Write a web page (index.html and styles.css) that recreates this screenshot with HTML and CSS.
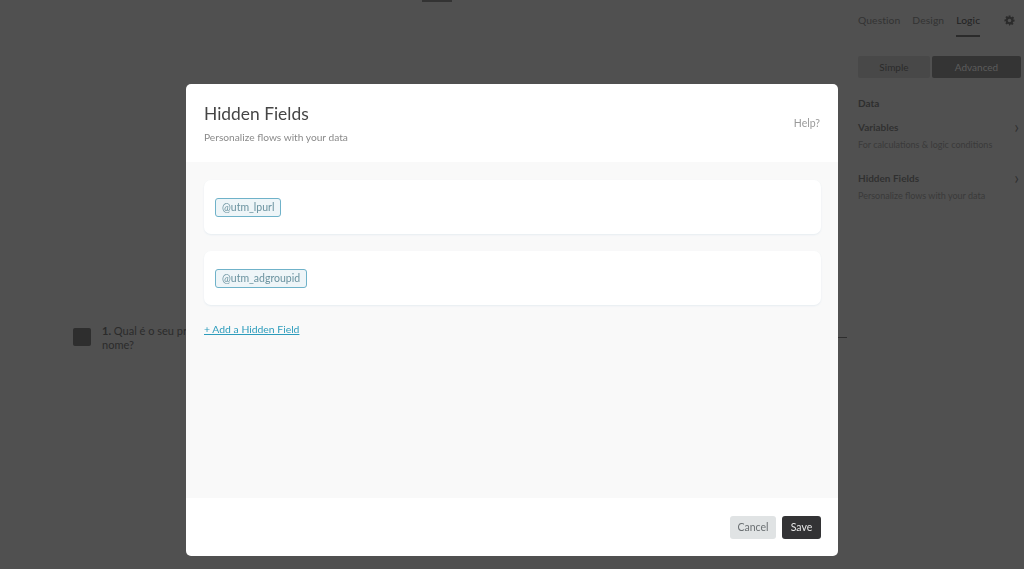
FILE: index.html
```html
<!DOCTYPE html>
<html lang="en">
<head>
    <meta charset="UTF-8">
    <meta name="viewport" content="width=device-width, initial-scale=1.0">
    <title>Hidden Fields</title>
    <link rel="stylesheet" href="styles.css">
</head>
<body>
    <div class="editor">
        <div class="canvas">
            <div class="top-mark"></div>
            <div class="question">
                <div class="question-icon"></div>
                <div class="question-text"><b>1.</b> Qual é o seu pri<br>nome?</div>
            </div>
            <div class="canvas-line"></div>
        </div>
        <div class="sidebar">
            <div class="tabs">
                <span>Question</span>
                <span>Design</span>
                <span class="tab-active">Logic</span>
                <svg class="gear" viewBox="0 0 24 24" width="11" height="11"><path fill="#2b2b2b" d="M10 1h4l.6 3.2 1.9.8 2.7-1.8 2.8 2.8-1.8 2.7.8 1.9L23 10v4l-3.2.6-.8 1.9 1.8 2.7-2.8 2.8-2.7-1.8-1.9.8L13 23h-2l-.6-3.2-1.9-.8-2.7 1.8-2.8-2.8 1.8-2.7-.8-1.9L1 14v-4l3.2-.6.8-1.9-1.8-2.7 2.8-2.8 2.7 1.8 1.9-.8zM12 8a4 4 0 1 0 0 8 4 4 0 0 0 0-8z"/></svg>
            </div>
            <div class="mode">
                <div class="mode-simple">Simple</div>
                <div class="mode-advanced">Advanced</div>
            </div>
            <div class="side-heading">Data</div>
            <div class="side-item">
                <div class="side-title">Variables <span>›</span></div>
                <div class="side-sub">For calculations &amp; logic conditions</div>
            </div>
            <div class="side-item">
                <div class="side-title">Hidden Fields <span>›</span></div>
                <div class="side-sub">Personalize flows with your data</div>
            </div>
        </div>
    </div>

    <div class="modal">
        <div class="modal-head">
            <div>
                <div class="modal-title">Hidden Fields</div>
                <div class="modal-sub">Personalize flows with your data</div>
            </div>
            <a class="help">Help?</a>
        </div>
        <div class="modal-body">
            <div class="field-card"><span class="tag">@utm_lpurl</span></div>
            <div class="field-card"><span class="tag">@utm_adgroupid</span></div>
            <a class="add-link">+ Add a Hidden Field</a>
        </div>
        <div class="modal-foot">
            <button class="btn btn-cancel">Cancel</button>
            <button class="btn btn-save">Save</button>
        </div>
    </div>
</body>
</html>
```

FILE: styles.css
```css
* {
    box-sizing: border-box;
}
body {
    margin: 0;
    height: 569px;
    overflow: hidden;
    background: #505050;
    font-family: Lato, "Open Sans", sans-serif;
    color: #2b2b2b;
}
.editor {
    display: flex;
    height: 100%;
}
.canvas {
    flex: 1;
    position: relative;
}
.top-mark {
    position: absolute;
    top: 0;
    left: 422px;
    width: 30px;
    height: 2px;
    background: #333;
}
.question {
    position: absolute;
    top: 324px;
    left: 73px;
    display: flex;
    gap: 11px;
    font-size: 11px;
    line-height: 14px;
}
.question-icon {
    width: 18px;
    height: 18px;
    margin-top: 4px;
    background: #2e2e2e;
    border-radius: 2px;
}
.question-text {
    white-space: nowrap;
}
.canvas-line {
    position: absolute;
    top: 337px;
    left: 838px;
    width: 9px;
    height: 1px;
    background: #2e2e2e;
}
.sidebar {
    width: 166px;
    padding: 10px 3px 0 0;
    font-size: 10px;
}
.tabs {
    display: flex;
    align-items: center;
    gap: 12px;
    height: 20px;
    font-size: 10.3px;
    letter-spacing: 0.1px;
    color: #333;
}
.tab-active {
    color: #222;
    position: relative;
}
.tab-active::after {
    content: "";
    position: absolute;
    left: 0;
    right: 0;
    bottom: -11px;
    height: 2px;
    background: #2b2b2b;
}
.gear {
    margin-left: 12px;
}
.mode {
    display: flex;
    gap: 2px;
    margin-top: 26px;
    height: 22px;
}
.mode-simple,
.mode-advanced {
    display: flex;
    align-items: center;
    justify-content: center;
    border-radius: 2px;
}
.mode-simple {
    width: 72px;
    background: #484848;
    color: #2b2b2b;
}
.mode-advanced {
    flex: 1;
    background: #343434;
    color: #5c5c5c;
}
.side-heading {
    margin-top: 19px;
    font-weight: 700;
    color: #2e2e2e;
}
.side-item {
    margin-top: 12px;
    height: 39px;
}
.side-title {
    display: flex;
    justify-content: space-between;
    font-weight: 700;
    color: #303030;
}
.side-title span {
    margin-right: 2px;
    font-size: 17px;
    line-height: 12px;
    font-weight: 400;
}
.side-sub {
    margin-top: 6px;
    font-size: 9px;
    color: #3a3a3a;
    white-space: nowrap;
}
.modal {
    position: fixed;
    top: 84px;
    left: 186px;
    width: 652px;
    height: 472px;
    display: flex;
    flex-direction: column;
    background: #fff;
    border-radius: 5px;
    overflow: hidden;
}
.modal-head {
    height: 78px;
    flex: none;
    display: flex;
    justify-content: space-between;
    align-items: center;
    padding: 0 18px;
}
.modal-title {
    font-size: 17.4px;
    line-height: 24px;
    color: #454545;
}
.modal-sub {
    margin-top: 4px;
    font-size: 10.2px;
    line-height: 14px;
    color: #8a8a8a;
}
.help {
    font-size: 10.5px;
    color: #9a9a9a;
}
.modal-body {
    flex: 1;
    background: #f9f9f9;
    padding: 18px 17px 0 18px;
    display: flex;
    flex-direction: column;
    gap: 17px;
    align-items: flex-start;
}
.field-card {
    width: 100%;
    height: 54px;
    display: flex;
    align-items: center;
    padding-left: 11px;
    background: #fff;
    border-radius: 7px;
    box-shadow: 0 1px 2px #e6ecf1;
}
.tag {
    height: 19px;
    padding: 0 6px;
    display: flex;
    align-items: center;
    font-size: 10.5px;
    color: #6a929f;
    background: #eef5f8;
    border: 1px solid #6fb2c9;
    border-radius: 3px;
}
.add-link {
    font-size: 10.4px;
    line-height: 14px;
    color: #2d9cbc;
    text-decoration: underline;
}
.modal-foot {
    height: 58px;
    flex: none;
    display: flex;
    justify-content: flex-end;
    align-items: center;
    gap: 6px;
    padding-right: 17px;
}
.btn {
    height: 23px;
    border: 0;
    border-radius: 3px;
    font-family: inherit;
    font-size: 10.5px;
    padding: 0;
}
.btn-cancel {
    width: 46px;
    background: #e0e3e4;
    color: #6a6f72;
}
.btn-save {
    width: 39px;
    background: #333335;
    color: #e8e8e8;
}
```
